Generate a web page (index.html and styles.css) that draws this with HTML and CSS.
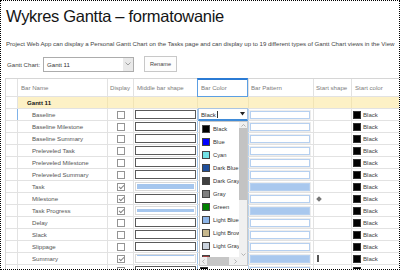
FILE: index.html
```html
<!DOCTYPE html>
<html lang="pl">
<head>
    <meta charset="UTF-8">
    <meta name="viewport" content="width=device-width, initial-scale=1.0">
    <title>Wykres Gantta – formatowanie</title>
    <link rel="stylesheet" href="styles.css">
</head>
<body>
<div class="frame">
    <h1>Wykres Gantta – formatowanie</h1>
    <p class="intro">Project Web App can display a Personal Gantt Chart on the Tasks page and can display up to 19 different types of Gantt Chart views in the View</p>

    <div class="toolbar">
        <label>Gantt Chart:</label>
        <div class="select">
            <span class="select-text">Gantt 11</span>
            <span class="select-arrow"><svg width="6" height="4" viewBox="0 0 6 4"><polyline points="0.5,0.5 3,3 5.5,0.5" fill="none" stroke="#8a8a8a" stroke-width="0.8"/></svg></span>
        </div>
        <button>Rename</button>
    </div>

    <div class="grid" id="grid">
        <div class="row head">
            <div class="cell"></div>
            <div class="cell">Bar Name</div>
            <div class="cell">Display</div>
            <div class="cell">Middle bar shape</div>
            <div class="cell active">Bar Color</div>
            <div class="cell">Bar Pattern</div>
            <div class="cell">Start shape</div>
            <div class="cell">Start color</div>
        </div>
        <div class="row group">
            <div class="cell"></div>
            <div class="cell">Gantt 11</div>
            <div class="cell"></div>
            <div class="cell"></div>
            <div class="cell"></div>
            <div class="cell"></div>
            <div class="cell"></div>
            <div class="cell"></div>
        </div>
    </div>
</div>

<script>
    // name, displayed, middle shape, filled pattern, start shape
    var bars = [
        ['Baseline', 0, '', 0, ''],
        ['Baseline Milestone', 0, '', 0, ''],
        ['Baseline Summary', 0, '', 0, ''],
        ['Preleveled Task', 0, '', 0, ''],
        ['Preleveled Milestone', 0, '', 0, ''],
        ['Preleveled Summary', 0, '', 0, ''],
        ['Task', 1, 'task', 1, ''],
        ['Milestone', 1, '', 0, 'diamond'],
        ['Task Progress', 1, 'progress', 1, ''],
        ['Delay', 0, '', 0, ''],
        ['Slack', 0, '', 0, ''],
        ['Slippage', 0, '', 0, ''],
        ['Summary', 1, 'summary', 1, 'tick'],
        ['Critical Task', 1, '', 0, '']
    ];

    var colors = [
        ['Black', '#000000'], ['Blue', '#0000ff'], ['Cyan', '#72e2e6'],
        ['Dark Blue', '#1f4f9b'], ['Dark Gray', '#404040'], ['Gray', '#7f7f7f'],
        ['Green', '#008000'], ['Light Blue', '#8db5e8'], ['Light Brown', '#c6b78c'],
        ['Light Gray', '#cbd4df'], ['Maroon', '#a03c3c']
    ];

    function dropdown() {
        var options = colors.map(function (c) {
            return '<div class="option"><span class="swatch" style="background:' + c[1] + '"></span>' + c[0] + '</div>';
        }).join('');
        var up = '<svg width="5" height="3" viewBox="0 0 5 3"><polyline points="0.5,2.5 2.5,0.5 4.5,2.5" fill="none" stroke="#999" stroke-width="0.7"/></svg>';
        var down = '<svg width="5" height="3" viewBox="0 0 5 3"><polyline points="0.5,0.5 2.5,2.5 4.5,0.5" fill="none" stroke="#999" stroke-width="0.7"/></svg>';
        var left = '<svg width="3" height="5" viewBox="0 0 3 5"><polyline points="2.5,0.5 0.5,2.5 2.5,4.5" fill="none" stroke="#999" stroke-width="0.7"/></svg>';
        var right = '<svg width="3" height="5" viewBox="0 0 3 5"><polyline points="0.5,0.5 2.5,2.5 0.5,4.5" fill="none" stroke="#999" stroke-width="0.7"/></svg>';
        return '<div class="combo">Black<span class="caret"></span>' +
            '<svg class="combo-arrow" width="5" height="4" viewBox="0 0 5 4"><polygon points="0,0 5,0 2.5,3.5" fill="#222"/></svg></div>' +
            '<div class="list">' +
            '<div class="options">' + options + '</div>' +
            '<div class="vscroll"><span class="arrow">' + up + '</span><span class="thumb"></span><span class="spacer"></span><span class="arrow">' + down + '</span></div>' +
            '<div class="hscroll"><span class="arrow">' + left + '</span><span class="thumb"></span><span class="spacer"></span><span class="arrow">' + right + '</span></div>' +
            '<div class="corner"></div>' +
            '</div>';
    }

    function barColor(i) {
        if (i === 0) return dropdown();
        // rows under the open list are hidden by it
        if (i < 13) return '';
        return '<span class="swatch"></span><span class="label">Black</span>';
    }

    var grid = document.getElementById('grid');
    bars.forEach(function (b, i) {
        var row = document.createElement('div');
        row.className = 'row' + (i === 0 ? ' current' : '');
        row.innerHTML =
            '<div class="cell"></div>' +
            '<div class="cell name">' + b[0] + '</div>' +
            '<div class="cell center"><span class="check' + (b[1] ? ' on' : '') + '"></span></div>' +
            '<div class="cell bar-col"><span class="shape ' + b[2] + '"></span></div>' +
            '<div class="cell color-col' + (i === 0 ? ' editing' : '') + '">' + barColor(i) + '</div>' +
            '<div class="cell"><span class="pattern' + (b[3] ? ' fill' : '') + '"></span></div>' +
            '<div class="cell start">' + (b[4] ? '<span class="' + b[4] + '"></span>' : '') + '</div>' +
            '<div class="cell end"><span class="swatch"></span><span class="label">Black</span></div>';
        grid.appendChild(row);
    });
</script>
</body>
</html>
```

FILE: styles.css
```css
body {
    margin: 0;
    font-family: "Liberation Sans", Arial, sans-serif;
    color: #444;
    background: #fff;
}
.frame {
    width: 400px;
    height: 270px;
    box-sizing: border-box;
    border: 1px dotted #000;
    padding-left: 4px;
    overflow: hidden;
}
h1 {
    margin: 5px 0 0 1px;
    font-size: 16.5px;
    font-weight: normal;
    line-height: 20px;
    letter-spacing: -0.3px;
    color: #151515;
    white-space: nowrap;
}
.intro {
    margin: 14px 0 0 1px;
    font-size: 6.1px;
    line-height: 8px;
    white-space: nowrap;
}

/* toolbar */
.toolbar {
    display: flex;
    align-items: center;
    height: 16px;
    margin-top: 8px;
    padding-left: 2px;
}
.toolbar label {
    width: 36px;
    font-size: 6.1px;
}
.select {
    display: flex;
    align-items: stretch;
    width: 91px;
    height: 15px;
    box-sizing: border-box;
    border: 1px solid #acacac;
    font-size: 6.1px;
    color: #333;
}
.select-text {
    flex: 1;
    display: flex;
    align-items: center;
    padding-left: 3px;
}
.select-arrow {
    width: 10px;
    display: flex;
    align-items: center;
    justify-content: center;
    background: #e9e9e9;
}
.toolbar button {
    margin-left: 10px;
    width: 33px;
    height: 16px;
    padding: 0;
    border: 1px solid #c8c8c8;
    background: #fdfdfd;
    font: 5.6px "Liberation Sans", Arial, sans-serif;
    color: #444;
}

/* grid */
.grid {
    margin-top: 6px;
    border-top: 1px solid #d6d6d6;
    border-left: 1px solid #d6d6d6;
}
.row {
    display: grid;
    grid-template-columns: 12px 90px 26px 64px 51px 65px 38px 60px;
    height: 12px;
    box-sizing: border-box;
    border-bottom: 1px solid #e2e2e2;
    font-size: 6.1px;
    color: #555;
}
.cell {
    display: flex;
    align-items: center;
    min-width: 0;
    white-space: nowrap;
    border-right: 1px solid #e2e2e2;
}
.row.head {
    height: 18px;
    color: #7d7d7d;
}
.row.head .cell:nth-child(2) { padding-left: 3px; }
.row.head .cell:nth-child(3) { padding-left: 2px; }
.row.head .cell:nth-child(4) { padding-left: 3px; }
.row.head .cell:nth-child(5) { padding-left: 3px; }
.row.head .cell:nth-child(6) { padding-left: 2px; }
.row.head .cell:nth-child(7) { padding-left: 2px; }
.row.head .cell:nth-child(8) { padding-left: 3px; }
.row.head .active {
    position: relative;
}
.row.head .active::before {
    content: "";
    position: absolute;
    left: -1px;
    right: 0;
    top: -1px;
    bottom: -1px;
    border: 1px solid #5c9fe3;
    border-top: 2px solid #2b7bd4;
}
.row.group {
    font-weight: bold;
    color: #151515;
}
.row.group .cell:not(:first-child) {
    background: #fdf1c6;
    border-right-color: #f1e4b6;
}
.row.group .cell:nth-child(2) {
    padding-left: 9px;
}
.row.current .cell:first-child {
    border-right-color: #7fb2e8;
}
.name {
    padding-left: 14px;
}
.center {
    justify-content: center;
}
.bar-col {
    border-right-color: #9fc4ea;
}
.color-col {
    padding-left: 2px;
    border-right-color: #b9d4f0;
}
.start {
    padding-left: 3px;
}
.end {
    padding-left: 1px;
}
.label {
    margin-left: 2px;
    color: #444;
}

/* cell content */
.check {
    position: relative;
    width: 8px;
    height: 8px;
    box-sizing: border-box;
    border: 1px solid #949494;
    background: #fff;
}
.check.on::after {
    content: "";
    position: absolute;
    left: 2px;
    top: 0;
    width: 2px;
    height: 4px;
    border: solid #858585;
    border-width: 0 1px 1px 0;
    transform: rotate(45deg);
}
.shape {
    flex: 1;
    height: 9px;
    margin: 0 1px;
    box-sizing: border-box;
    border: 1px solid #5a5a5a;
    background: #fff;
}
.shape.task,
.shape.progress,
.shape.summary {
    border-color: #d9d9d9;
    background: #a5c6ee content-box;
}
.shape.task { padding: 1px; }
.shape.progress { padding: 2px 1px; }
.shape.summary { padding: 0 1px 6px; }
.pattern {
    flex: 1;
    height: 8px;
    margin: 0 3px 0 1px;
    box-sizing: border-box;
    border: 1px solid #b6d0f0;
    background: #fff;
    box-shadow: 0 0 0 1px #ededed;
}
.pattern.fill {
    background: #a9c8ee;
}
.swatch {
    flex: none;
    width: 8px;
    height: 8px;
    box-sizing: border-box;
    border: 1px solid #333;
    background: #000;
}
.diamond {
    width: 4px;
    height: 4px;
    background: #777;
    transform: rotate(45deg);
}
.tick {
    width: 2px;
    height: 7px;
    background: #555;
}

/* colour drop-down */
.editing {
    position: relative;
}
.combo {
    position: absolute;
    left: 0;
    top: -1px;
    width: 50px;
    height: 13px;
    box-sizing: border-box;
    display: flex;
    align-items: center;
    padding-left: 2px;
    border: 1px solid #aac4e3;
    border-bottom: 2px solid #3f8bd8;
    background: #fff;
    color: #333;
    z-index: 2;
}
.caret {
    width: 1px;
    height: 7px;
    margin-left: 1px;
    background: #333;
}
.combo-arrow {
    margin-left: auto;
    margin-right: 2px;
}
.list {
    position: absolute;
    left: 1px;
    top: 12px;
    width: 49px;
    height: 145px;
    box-sizing: border-box;
    display: grid;
    grid-template-columns: 1fr 8px;
    grid-template-rows: 1fr 8px;
    border: 1px solid #c8c8c8;
    background: #fff;
    z-index: 2;
}
.options {
    overflow: hidden;
}
.option {
    height: 13px;
    display: flex;
    align-items: center;
    padding-left: 2px;
    font-size: 5.8px;
    color: #333;
    white-space: nowrap;
}
.option .swatch {
    margin-right: 3px;
    border-color: #444;
}
.vscroll,
.hscroll,
.corner {
    background: #f0f0f0;
}
.vscroll {
    display: flex;
    flex-direction: column;
}
.vscroll .arrow {
    height: 6px;
    display: flex;
    align-items: center;
    justify-content: center;
}
.vscroll .thumb {
    height: 72px;
    background: #c3c3c3;
}
.hscroll {
    display: flex;
}
.hscroll .arrow {
    width: 7px;
    display: flex;
    align-items: center;
    justify-content: center;
}
.hscroll .thumb {
    width: 22px;
    background: #c6c6c6;
}
.spacer {
    flex: 1;
}
```
